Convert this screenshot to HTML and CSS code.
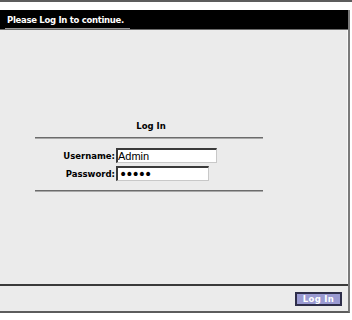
FILE: index.html
```html
<!DOCTYPE html>
<html>
<head>
<meta charset="utf-8">
<link rel="stylesheet" href="styles.css">
</head>
<body>
<div class="topbar"></div>
<div class="window">
  <div class="titlebar"><span class="tab">Please Log In to continue.</span></div>
  <div class="content">
    <form class="login">
      <div class="heading">Log In</div>
      <div class="rule"></div>
      <div class="fields">
        <label class="lbl">Username:</label><input class="inp user" type="text" value="Admin">
        <label class="lbl">Password:</label><input class="inp pass" type="password" value="admin">
      </div>
      <div class="rule"></div>
    </form>
  </div>
  <div class="footer"><button class="btn" type="button">Log In</button></div>
</div>
</body>
</html>
```
FILE: styles.css
```css
html, body { margin: 0; padding: 0; background: #fff; }
body { font-family: "DejaVu Sans", Verdana, sans-serif; font-size: 8.5px; font-weight: bold; color: #000; }
.topbar { height: 2px; background: #5c5c5c; margin-bottom: 8px; }
.window { width: 348px; border-right: 2px solid #7a7a7a; border-bottom: 2px solid #5c5c5c; }
.titlebar { height: 19px; background: #000; border-bottom: 1px solid #6a6a6a; }
.tab { display: inline-block; white-space: nowrap; color: #fff; padding: 6px 0 0 2px; height: 19px; width: 125px; box-sizing: border-box; border-bottom: 1px solid #9a9a9a; margin-left: 5px; line-height: 9px; letter-spacing: -0.3px; }
.content { background: #ebebeb; height: 254px; border-right: 1px solid #f8f8f8; padding-top: 91px; box-sizing: border-box; }
.login { width: 228px; margin-left: 35px; }
.heading { text-align: center; padding-left: 4px; height: 16px; line-height: 11px; }
.rule { height: 1px; background: #6b6b6b; border-bottom: 1px solid #a8a8a8; }
.fields { display: grid; grid-template-columns: 81px auto; row-gap: 3px; align-items: center; padding: 9px 0 9px; justify-items: start; }
.lbl { justify-self: end; padding-right: 1px; }
.inp { margin: 0; height: 15px; box-sizing: border-box; border: 1px solid #c8c8c8; border-top: 2px solid #3a3a3a; border-left: 2px solid #3a3a3a; background: #fff; font-family: "Liberation Sans", Arial, sans-serif; font-size: 11px; padding: 0; color: #000; font-weight: normal; }
.user { width: 101px; }
.pass { width: 93px; font-family: "DejaVu Sans", sans-serif; font-size: 14px; letter-spacing: -2px; padding-left: 1px; }
.footer { background: #ebebeb; border-top: 2px solid #3a3a3a; height: 27px; display: flex; justify-content: flex-end; align-items: center; padding-right: 6px; box-sizing: border-box; }
.btn { width: 47px; height: 14px; padding: 0; background: #9a9ad2; border: 2px solid #2e2e4a; color: #fff; font-family: "DejaVu Sans", Verdana, sans-serif; font-weight: bold; font-size: 8.5px; line-height: 10px; letter-spacing: 0.3px; }
```
